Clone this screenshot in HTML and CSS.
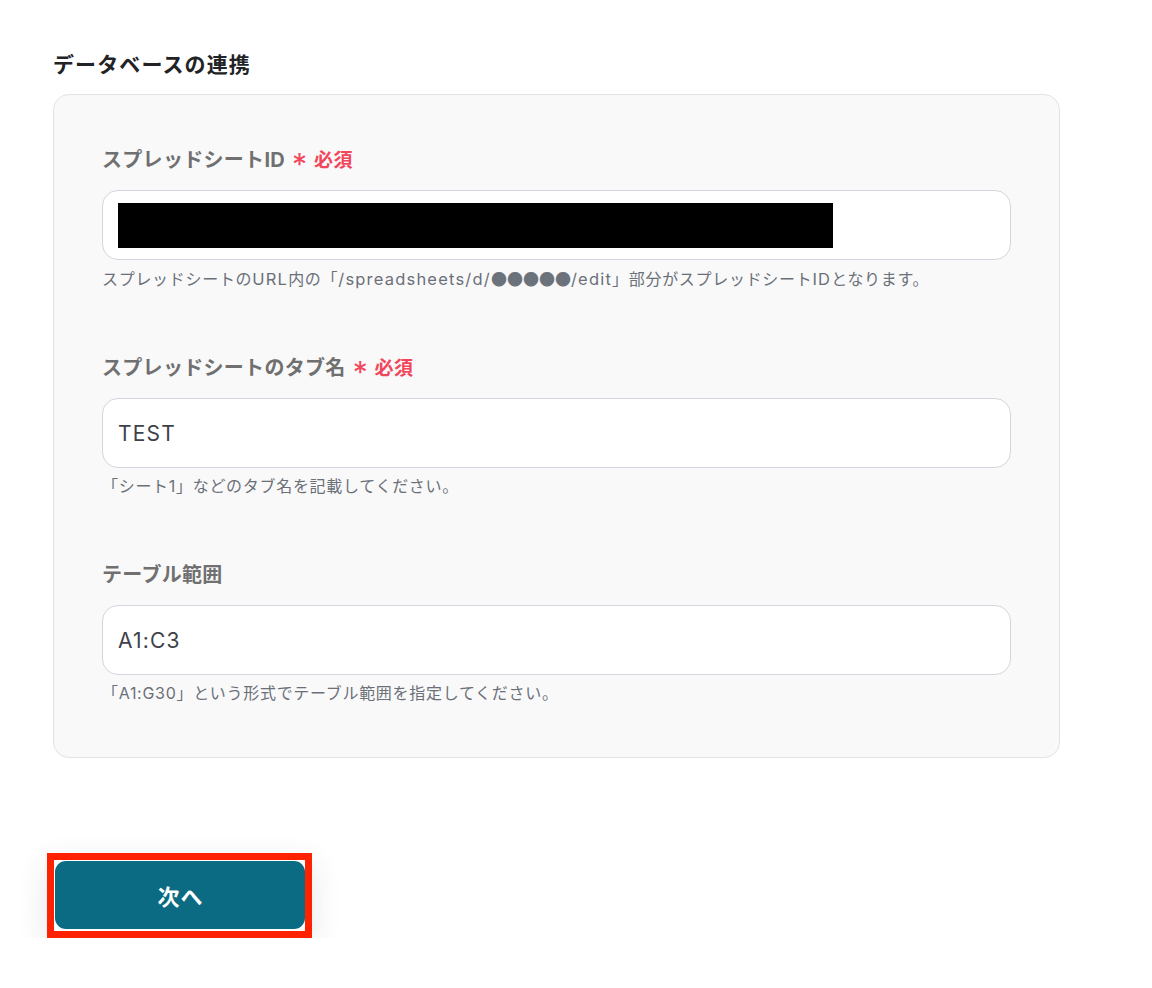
FILE: index.html
```html
<!DOCTYPE html>
<html lang="ja">
<head>
<meta charset="utf-8">
<title>データベースの連携</title>
<link rel="stylesheet" href="styles.css">
</head>
<body>
<main class="page">
  <h2 class="section-title">データベースの連携</h2>
  <section class="card">
    <div class="field">
      <label class="label">スプレッドシートID <span class="req"><span class="ast">*</span> 必須</span></label>
      <div class="input"><span class="redact"></span></div>
      <p class="help">スプレッドシートの<span class="lat">URL</span>内の「<span class="lat">/spreadsheets/d/</span><span class="dots">●●●●●</span><span class="lat">/edit</span>」部分がスプレッドシート<span class="lat">ID</span>となります。</p>
    </div>
    <div class="field">
      <label class="label">スプレッドシートのタブ名 <span class="req"><span class="ast">*</span> 必須</span></label>
      <div class="input">TEST</div>
      <p class="help">「シート1」などのタブ名を記載してください。</p>
    </div>
    <div class="field">
      <label class="label">テーブル範囲</label>
      <div class="input">A1:C3</div>
      <p class="help">「A1:G30」という形式でテーブル範囲を指定してください。</p>
    </div>
  </section>
  <div class="actions">
    <div class="highlight">
      <button class="btn">次へ</button>
    </div>
  </div>
</main>
</body>
</html>
```
FILE: styles.css
```css
* { box-sizing: border-box; }
html, body { margin: 0; padding: 0; background: #ffffff; }
body {
  font-family: "Inter", "Noto Sans CJK JP", sans-serif;
  color: #222;
}
.page {
  padding: 50px 0 0 53px;
  width: 1060px;
}
.section-title {
  margin: 0;
  font-size: 21px;
  line-height: 30px;
  font-weight: 700;
  letter-spacing: 1.1px;
  color: #222326;
}
.card {
  margin-top: 14px;
  width: 1007px;
  background: #f9f9fa;
  border: 1px solid #e2e3e6;
  border-radius: 16px;
  padding: 51px 48px 54px 48px;
  display: flex;
  flex-direction: column;
  gap: 65px;
}
.field {
  display: flex;
  flex-direction: column;
}
.label {
  display: block;
  height: 28px;
  font-size: 20px;
  line-height: 28px;
  font-weight: 700;
  letter-spacing: 0.3px;
  color: #707070;
  margin-bottom: 16px;
  white-space: nowrap;
}
.req {
  color: #f2475b;
  font-size: 19px;
  line-height: 20px;
  font-weight: 600;
  letter-spacing: 0.5px;
  margin-left: 2px;
}
.ast {
  display: inline-block;
  font-size: 30px;
  font-weight: 400;
  line-height: 10px;
  vertical-align: -8px;
  margin-right: 1px;
}
.input {
  height: 70px;
  background: #fff;
  border: 1px solid #d3d6de;
  border-radius: 16px;
  padding: 0 15px;
  display: flex;
  align-items: center;
  font-size: 21px;
  color: #3d4149;
  letter-spacing: 1.2px;
}
.redact {
  display: block;
  width: 715px;
  height: 45px;
  background: #000;
}
.help {
  margin: 8px 0 0;
  font-size: 16px;
  line-height: 20px;
  letter-spacing: 0.7px;
  color: #6b7078;
  white-space: nowrap;
}
.lat {
  font-size: 16.5px;
  letter-spacing: 1.2px;
}
.dots {
  font-family: "Noto Sans CJK JP", sans-serif;
  font-size: 16px;
  letter-spacing: 0;
  color: #6c727c;
}
.actions {
  margin-top: 95px;
  margin-left: -6px;
}
.highlight {
  display: inline-block;
  border: 7px solid #ff2200;
  padding: 1px 0 2px 1px;
  background: #fff;
  box-shadow: 0 10px 30px rgba(40, 50, 70, 0.12);
}
.btn {
  display: block;
  width: 250px;
  height: 68px;
  border: none;
  border-radius: 11px;
  background: #0b6b82;
  color: #fff;
  font-family: "Inter", "Noto Sans CJK JP", sans-serif;
  font-size: 22px;
  font-weight: 700;
  letter-spacing: 1px;
  text-indent: 1px;
}
```
